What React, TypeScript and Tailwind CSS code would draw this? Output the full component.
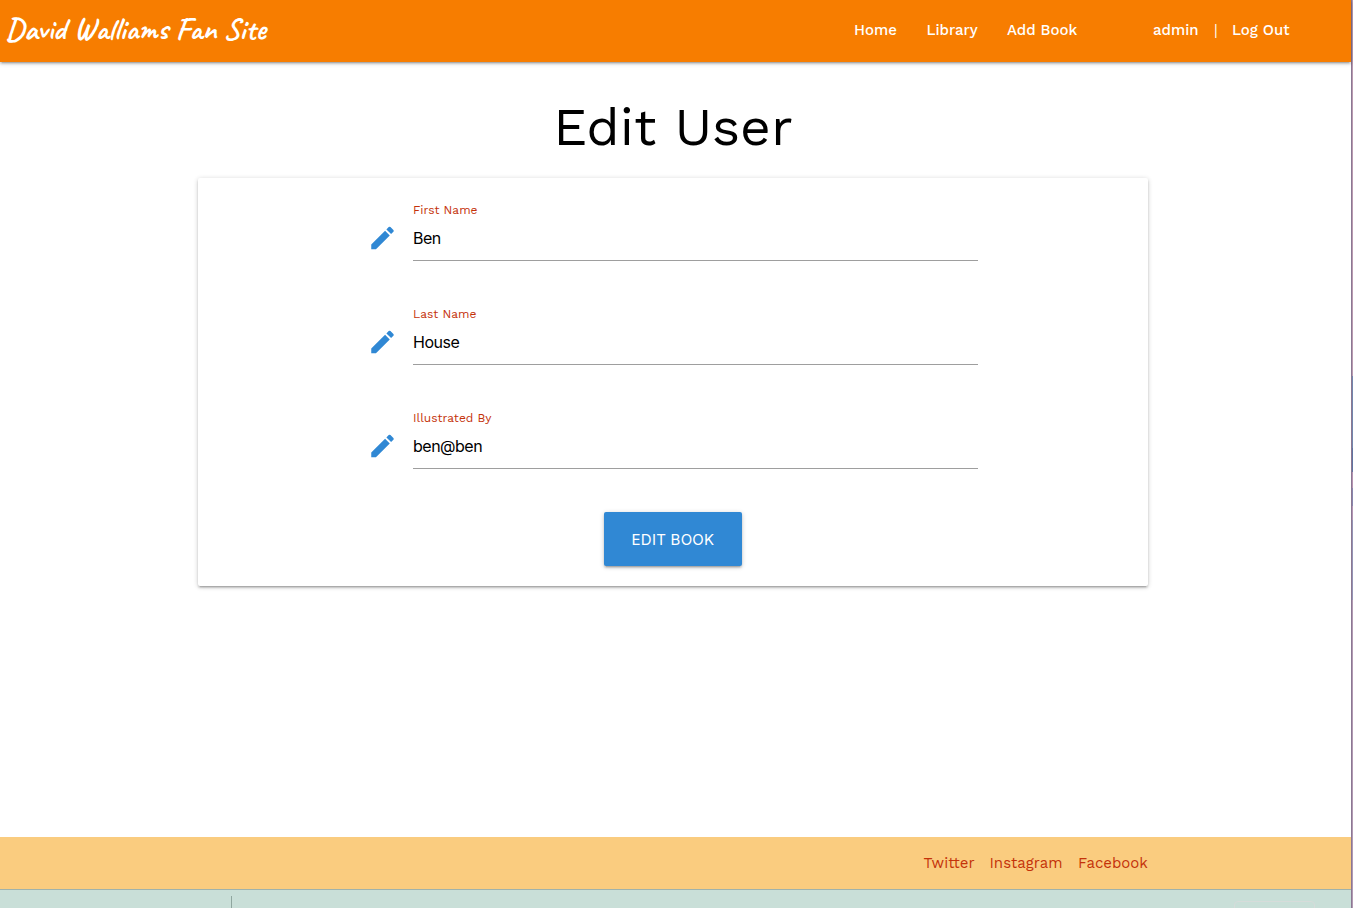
import React from "react";
import { MdEdit } from "react-icons/md";

const fields = [
  { label: "First Name", value: "Ben" },
  { label: "Last Name", value: "House" },
  { label: "Illustrated By", value: "ben@ben" },
];

function Header() {
  return (
    <header className="relative flex h-[62px] shrink-0 items-center bg-[#f77d00] text-white shadow-[0_2px_2px_0_rgba(0,0,0,0.14),0_3px_1px_-2px_rgba(0,0,0,0.12),0_1px_5px_0_rgba(0,0,0,0.2)]">
      <a className="ml-[5.5px] pb-[4px] whitespace-nowrap font-['Caveat','Lato',cursive] text-[31px] leading-[58px] font-semibold" href="#">
        <span>David Walliams Fan Site</span>
      </a>
      <nav className="ml-auto flex pr-[61px] pb-[2px] text-[15px] leading-5 font-medium whitespace-nowrap">
        <a className="w-[72.5px]" href="#"><span>Home</span></a>
        <a className="w-[80.5px]" href="#"><span>Library</span></a>
        <a className="w-[146px]" href="#"><span>Add Book</span></a>
        <a className="w-[61px]" href="#"><span>admin</span></a>
        <span className="w-[18px] font-normal">|</span>
        <a className="w-[58px]" href="#"><span>Log Out</span></a>
      </nav>
    </header>
  );
}

function Field({ label, value }: (typeof fields)[number]) {
  return (
    <div className="flex h-[104px]">
      <MdEdit className="mt-[21px] -ml-px h-[30px] w-[31px] shrink-0 text-[#3088d4]" />
      <label className="ml-[15px] flex h-[59px] w-[565px] flex-col border-b border-[#9e9e9e]">
        <span className="h-4 text-[12px] leading-4 text-[#c4320a]"><span>{label}</span></span>
        <span className="mt-2 h-6 font-['Inter',sans-serif] text-[16px] leading-6 tracking-[-0.5px] text-black"><span>{value}</span></span>
      </label>
    </div>
  );
}

export default function App() {
  return (
    <div className="flex h-[908px] w-[1353px] overflow-hidden bg-white font-['Work_Sans','Inter',sans-serif] text-black">
      <div className="flex w-[1351px] flex-col">
        <Header />
        <main className="ml-[198px] flex h-[775px] w-[950px] flex-col self-start">
          <h1 className="mt-[32px] h-[66px] text-center text-[53.4px] leading-[66px] font-[440]"><span>Edit User</span></h1>
          <form className="mt-[18px] flex h-[408px] flex-col rounded-[2px] bg-white pt-6 pl-[170px] shadow-[0_2px_2px_0_rgba(0,0,0,0.14),0_3px_1px_-2px_rgba(0,0,0,0.12),0_1px_5px_0_rgba(0,0,0,0.2)]">
            {fields.map((field) => <Field key={field.label} {...field} />)}
            <button type="button" className="-mt-[2px] ml-[236px] h-[54px] w-[138px] shrink-0 rounded-[2px] bg-[#3088d4] pt-[2px] font-['Inter',sans-serif] text-[15px] tracking-[0.25px] text-white shadow-[0_2px_2px_0_rgba(0,0,0,0.14),0_3px_1px_-2px_rgba(0,0,0,0.12),0_1px_5px_0_rgba(0,0,0,0.2)]">
              <span>EDIT BOOK</span>
            </button>
          </form>
        </main>
        <footer className="flex h-[52px] shrink-0 justify-end bg-[#facc7f] pr-[203px] text-[15px] leading-[52px] whitespace-nowrap text-[#c4320a]">
          <a className="w-[66px]" href="#"><span>Twitter</span></a>
          <a className="w-[88.5px]" href="#"><span>Instagram</span></a>
          <a className="w-[70px]" href="#"><span>Facebook</span></a>
        </footer>
        <div className="flex h-[19px] shrink-0 overflow-hidden border-t border-[#9fb2ab] bg-[#c9dfd8] pt-[6px]">
          <div className="w-[232px] shrink-0 border-r border-[#8fa69f]" />
          <div className="mt-[5px] ml-[1002px] h-[30px] w-[81px] shrink-0 rounded-[4px] border border-[#d6dcda]" />
        </div>
      </div>
      <div className="flex w-[2px] flex-col border-l border-[#8b7893]">
        <div className="h-[376px] bg-[#b99ab0]" />
        <div className="h-[72px] bg-[#7286ad]" />
        <div className="h-[24px] bg-[#6074a1]" />
        <div className="h-[16px] bg-[#b592b0]" />
        <div className="h-[18px] bg-[#8886ae]" />
        <div className="h-[14px] bg-[#b394b3]" />
        <div className="h-[80px] bg-[#9493b5]" />
        <div className="flex-1 bg-[#b199b2]" />
      </div>
    </div>
  );
}
